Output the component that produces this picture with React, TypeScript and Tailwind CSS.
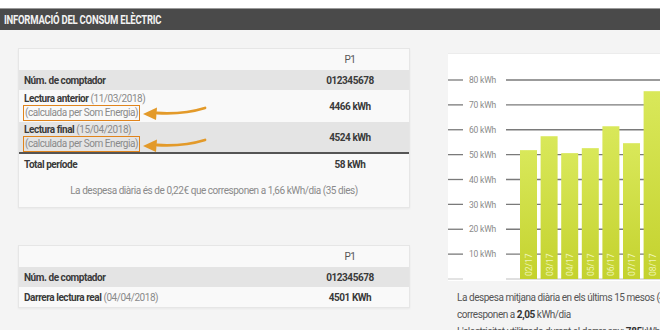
import React from "react";

const bars = [
  { label: "02/17", value: 51.8 },
  { label: "03/17", value: 57.4 },
  { label: "04/17", value: 50.6 },
  { label: "05/17", value: 52.6 },
  { label: "06/17", value: 61.4 },
  { label: "07/17", value: 54.6 },
  { label: "08/17", value: 75.5 },
];

const ticks = [80, 70, 60, 50, 40, 30, 20, 10, 0];

const Arrow = () => (
  <svg
    width="70"
    height="16"
    viewBox="0 0 70 16"
    className="absolute left-[120px] top-[15px]"
  >
    <path
      d="M66 3 C50 8 36 9 18 8"
      fill="none"
      stroke="#e39a2a"
      strokeWidth="2.8"
      strokeLinecap="round"
    />
    <path d="M4 9 L18 2.5 L17 15 Z" fill="#e39a2a" />
  </svg>
);

const Chart = () => {
  const y = (v: number) => 225 - v * 2.4875;
  return (
    <svg width="230" height="227" viewBox="0 0 230 227" className="block">
      <defs>
        <linearGradient id="bar" x1="0" y1="0" x2="0" y2="1">
          <stop offset="0" stopColor="#d9e85a" />
          <stop offset="1" stopColor="#c4d22e" />
        </linearGradient>
      </defs>
      {ticks.map((t) => (
        <g key={t}>
          <line x1="0" x2="15" y1={y(t)} y2={y(t)} stroke={t === 0 ? "#d4d4d4" : "#7a7a7a"} strokeWidth="1.3" />
          <line x1="58" x2="230" y1={y(t)} y2={y(t)} stroke={t === 0 ? "#d4d4d4" : "#7a7a7a"} strokeWidth="1.3" />
          {t > 0 && (
            <text
              x="21"
              y={y(t) + 3.2}
              fontSize="8.5"
              letterSpacing="-0.2"
              fill="#8a8a8a"
              fontFamily="Roboto, sans-serif"
            >
              {t} kWh
            </text>
          )}
        </g>
      ))}
      {bars.map((b, i) => {
        const x = 72 + i * 20.6;
        return (
          <g key={b.label}>
            <rect x={x} y={y(b.value)} width="17" height={225 - y(b.value)} fill="url(#bar)" />
            <text
              transform={`translate(${x + 12} 222) rotate(-90)`}
              fontSize="8.5"
              fill="#eef4b4"
              fontFamily="Roboto, sans-serif"
            >
              {b.label}
            </text>
          </g>
        );
      })}
    </svg>
  );
};

export default function App() {
  return (
    <div className="w-[660px] h-[330px] overflow-hidden bg-[#f4f4f4] font-['Roboto',sans-serif] text-[#3a3a3a]">
      <div className="h-2 bg-white" />
      <div className="h-[22px] bg-[#4a4a4a] border-t border-[#9a9a9a] px-1 flex items-center">
        <span className="text-[13px] font-bold text-[#f2f2f2] tracking-[-0.3px] origin-left scale-x-[0.73] whitespace-nowrap">
          INFORMACIÓ DEL CONSUM ELÈCTRIC
        </span>
      </div>

      <div className="flex pt-[18px]">
        <div className="ml-[18px] w-[392px] flex flex-col shrink-0 text-[10px] tracking-[-0.45px]">
          <div className="bg-[#f9f9f9] border border-[#e6e6e6] shadow-[0_1px_2px_rgba(0,0,0,0.05)]">
            <div className="grid grid-cols-[1fr_118px] h-[21px] items-center">
              <div />
              <div className="text-center text-[#555]">P1</div>
            </div>
            <div className="grid grid-cols-[1fr_118px] h-5 items-center bg-[#e4e4e4] font-bold">
              <div className="pl-[5px]">Núm. de comptador</div>
              <div className="text-center">012345678</div>
            </div>
            <div className="grid grid-cols-[1fr_118px] h-8 items-center relative">
              <div className="pl-[4px] leading-[13px]">
                <div className="pl-px">
                  <span className="font-bold">Lectura anterior</span>{" "}
                  <span className="text-[#8a8a8a]">(11/03/2018)</span>
                </div>
                <div className="inline-block border-[1.5px] border-[#e0841c] px-px leading-[14px] text-[#8a8a8a]">
                  (calculada per Som Energia)
                </div>
              </div>
              <div className="text-center font-bold">4466 kWh</div>
              <Arrow />
            </div>
            <div className="grid grid-cols-[1fr_118px] h-8 items-center relative bg-[#e4e4e4] border-b-2 border-[#555]">
              <div className="pl-[4px] leading-[13px]">
                <div className="pl-px">
                  <span className="font-bold">Lectura final</span>{" "}
                  <span className="text-[#8a8a8a]">(15/04/2018)</span>
                </div>
                <div className="inline-block border-[1.5px] border-[#e0841c] px-px leading-[14px] text-[#8a8a8a]">
                  (calculada per Som Energia)
                </div>
              </div>
              <div className="text-center font-bold">4524 kWh</div>
              <Arrow />
            </div>
            <div className="grid grid-cols-[1fr_118px] h-5 items-center font-bold">
              <div className="pl-[5px]">Total període</div>
              <div className="text-center">58 kWh</div>
            </div>
            <div className="h-[33px] flex items-center justify-center text-[#8a8a8a]">
              La despesa diària és de 0,22€ que corresponen a 1,66 kWh/dia (35 dies)
            </div>
          </div>

          <div className="mt-[37px] bg-[#f9f9f9] border border-[#e6e6e6] shadow-[0_1px_2px_rgba(0,0,0,0.05)]">
            <div className="grid grid-cols-[1fr_118px] h-[21px] items-center">
              <div />
              <div className="text-center text-[#555]">P1</div>
            </div>
            <div className="grid grid-cols-[1fr_118px] h-5 items-center bg-[#e4e4e4] font-bold">
              <div className="pl-[5px]">Núm. de comptador</div>
              <div className="text-center">012345678</div>
            </div>
            <div className="grid grid-cols-[1fr_118px] h-5 items-center">
              <div className="pl-[5px]">
                <span className="font-bold">Darrera lectura real</span>{" "}
                <span className="text-[#8a8a8a]">(04/04/2018)</span>
              </div>
              <div className="text-center font-bold">4501 KWh</div>
            </div>
          </div>
        </div>

        <div className="ml-[38px] mt-[5px] w-[230px] shrink-0">
          <div className="bg-white border-t border-[#ececec]">
            <Chart />
          </div>
          <div className="pl-[9px] pt-[8px] text-[10px] tracking-[-0.45px] leading-[17px] text-[#555] whitespace-nowrap">
            <div>La despesa mitjana diària en els últims 15 mesos (4,50€)</div>
            <div>
              corresponen a <span className="font-bold text-[#333]">2,05</span> kWh/dia
            </div>
            <div>
              L'electricitat utilitzada durant el darrer any:{" "}
              <span className="font-bold text-[#333]">785</span>kWh
            </div>
          </div>
        </div>
      </div>
    </div>
  );
}
